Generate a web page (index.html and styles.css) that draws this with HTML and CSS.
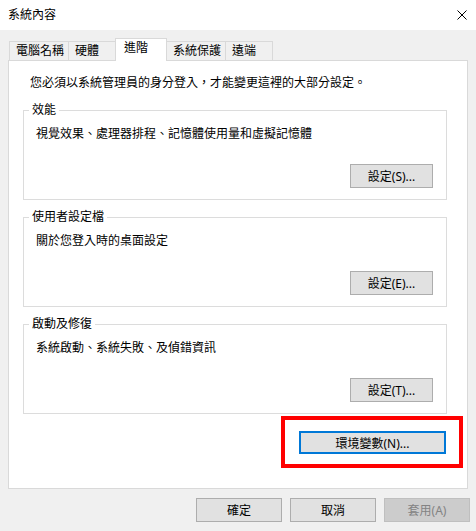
FILE: index.html
```html
<!DOCTYPE html>
<html lang="zh-Hant">
<head>
    <meta charset="UTF-8">
    <title>系統內容</title>
    <link rel="stylesheet" href="styles.css">
</head>
<body>

    <div class="window">
        <header class="titlebar">
            <span class="title">系統內容</span>
            <button class="close" aria-label="關閉">
                <svg width="10" height="10" viewBox="0 0 10 10">
                    <path d="M0.5 0.5 L9.5 9.5 M9.5 0.5 L0.5 9.5" stroke="#000" stroke-width="1" fill="none"/>
                </svg>
            </button>
        </header>

        <div class="content">
            <div class="tabs">
                <div class="tab">電腦名稱</div>
                <div class="tab">硬體</div>
                <div class="tab active">進階</div>
                <div class="tab">系統保護</div>
                <div class="tab">遠端</div>
            </div>

            <div class="panel">
                <p class="note">您必須以系統管理員的身分登入，才能變更這裡的大部分設定。</p>

                <div class="group">
                    <span class="group-title">效能</span>
                    <p class="group-desc">視覺效果、處理器排程、記憶體使用量和虛擬記憶體</p>
                    <button class="btn group-btn">設定(S)...</button>
                </div>

                <div class="group">
                    <span class="group-title">使用者設定檔</span>
                    <p class="group-desc">關於您登入時的桌面設定</p>
                    <button class="btn group-btn">設定(E)...</button>
                </div>

                <div class="group">
                    <span class="group-title">啟動及修復</span>
                    <p class="group-desc">系統啟動、系統失敗、及偵錯資訊</p>
                    <button class="btn group-btn">設定(T)...</button>
                </div>

                <div class="env-row">
                    <button class="btn env-btn">環境變數(N)...</button>
                </div>
            </div>

            <div class="dialog-buttons">
                <button class="btn">確定</button>
                <button class="btn">取消</button>
                <button class="btn" disabled>套用(A)</button>
            </div>
        </div>

        <div class="highlight"></div>
    </div>

</body>
</html>
```

FILE: styles.css
```css
body {
    margin: 0;
    font-family: "Noto Sans", "Noto Sans CJK TC", sans-serif;
    font-size: 12px;
    color: #000;
    background: #f0f0f0;
}

.window {
    position: relative;
    width: 476px;
    height: 531px;
    overflow: hidden;
    background: #f0f0f0;
}

.titlebar {
    height: 30px;
    background: #fff;
    display: flex;
    align-items: center;
    justify-content: space-between;
    padding: 0 9px 0 8px;
    box-sizing: border-box;
}

.title {
    line-height: 16px;
}

.close {
    background: none;
    border: none;
    padding: 0;
    width: 10px;
    height: 10px;
    display: flex;
}

.content {
    padding: 8px 0 0 8px;
}

/* tab strip */
.tabs {
    display: flex;
    align-items: flex-end;
    margin-left: 1px;
    position: relative;
    z-index: 1;
}

.tab {
    box-sizing: border-box;
    min-width: 48px;
    height: 19px;
    padding: 0 4px 0 6px;
    line-height: 18px;
    border: 1px solid #d9d9d9;
    border-bottom: none;
    margin-right: -1px;
    background: #f0f0f0;
    white-space: nowrap;
}

.tab.active {
    min-width: 52px;
    height: 23px;
    margin-bottom: -1px;
    padding-left: 8px;
    background: #fff;
    position: relative;
    z-index: 1;
}

.panel {
    box-sizing: border-box;
    width: 460px;
    height: 429px;
    background: #fff;
    border: 1px solid #d9d9d9;
    display: flex;
    flex-direction: column;
}

.note {
    margin: 14px 0 0 21px;
    line-height: 16px;
}

/* group boxes */
.group {
    box-sizing: border-box;
    height: 90px;
    margin: 17px 20px 0 14px;
    border: 1px solid #dcdcdc;
    display: flex;
    flex-direction: column;
}

.note + .group {
    margin-top: 19px;
}

.group-title {
    align-self: flex-start;
    margin: -8px 0 0 5px;
    padding: 0 3px;
    line-height: 14px;
    background: #fff;
}

.group-desc {
    margin: 9px 0 0 12px;
    line-height: 16px;
}

.btn {
    box-sizing: border-box;
    width: 86px;
    height: 24px;
    padding: 0;
    font-family: inherit;
    font-size: 12px;
    color: #000;
    background: #e1e1e1;
    border: 1px solid #adadad;
}

.btn:disabled {
    background: #cccccc;
    border-color: #bfbfbf;
    color: #838383;
}

.group-btn {
    width: 83px;
    align-self: flex-end;
    margin: auto 13px 11px 0;
}

.env-row {
    display: flex;
    justify-content: flex-end;
    margin: 17px 21px 0 0;
}

.env-btn {
    width: 147px;
    height: 23px;
    border: 2px solid #0078d7;
}

.dialog-buttons {
    display: flex;
    justify-content: flex-end;
    gap: 8px;
    margin-top: 9px;
    padding-right: 6px;
}

/* annotation drawn over the screenshot */
.highlight {
    position: absolute;
    left: 281px;
    top: 416px;
    width: 182px;
    height: 52px;
    box-sizing: border-box;
    border: 4px solid #ff0000;
}
```
